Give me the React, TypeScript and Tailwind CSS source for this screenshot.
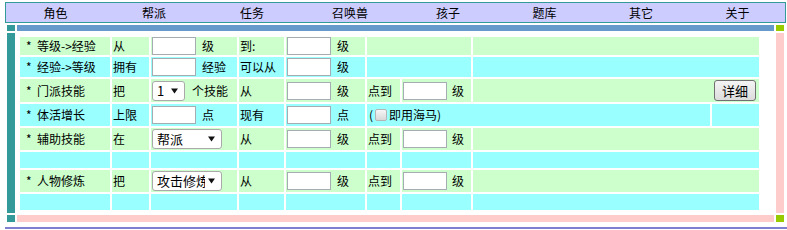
import React from 'react';

const G = 'bg-[#ccffcc]';
const C = 'bg-[#99ffff]';
const cellBase = 'flex items-center overflow-hidden whitespace-nowrap pl-[1px]';

const navItems = ['角色', '帮派', '任务', '召唤兽', '孩子', '题库', '其它', '关于'];

function TextBox() {
    return <input type="text" className="w-[44px] h-[18px] border border-[#a5acb2] bg-white shrink-0 outline-none" />;
}

function Arrow() {
    return (
        <svg width="7" height="6" viewBox="0 0 7 6" className="shrink-0">
            <path d="M0 0.5 H7 L3.5 5.5 Z" fill="#111" />
        </svg>
    );
}

function FakeSelect({ label, width, labelWidth }: { label: string; width: string; labelWidth: string }) {
    return (
        <div className={`${width} h-[20px] border border-[#a9a9a9] rounded-[3px] bg-white flex items-center justify-between pl-[4px] pr-[6px] shrink-0`}>
            <span className={`${labelWidth} overflow-hidden whitespace-nowrap text-[13px] leading-[18px]`}>{label}</span>
            <Arrow />
        </div>
    );
}

function Cell({ bg, span = '', children, className = '' }: { bg: string; span?: string; children?: React.ReactNode; className?: string }) {
    return <div className={`${cellBase} ${bg} ${span} ${className}`}>{children}</div>;
}

function Label({ text }: { text: string }) {
    return <span className="leading-[16px]">{'*\u00a0\u00a0' + text}</span>;
}

export default function App() {
    return (
        <div className="w-[787px] h-[230px] bg-white text-black text-[12px] leading-none overflow-hidden" style={{ fontFamily: '"Noto Sans CJK SC", "Liberation Sans", sans-serif' }}>
            {/* top menu */}
            <nav className="ml-[5px] mt-[2px] w-[781px] h-[21px] border border-[#339999] bg-[#ccccff] grid grid-cols-[99px_98px_98px_98px_98px_95px_98px_95px] items-center text-[12px]">
                {navItems.map((item) => (
                    <div key={item} className="text-center leading-[16px]">{item}</div>
                ))}
            </nav>

            {/* frame */}
            <div className="ml-[7px] mt-[2px] grid grid-cols-[8px_757px_8px] grid-rows-[6px_180px_7px] gap-x-[2px] gap-y-[2px]">
                <div className="bg-[#339999]" />
                <div className="bg-[#6699cc]" />
                <div className="bg-[#99cc00]" />

                <div className="bg-[#339999]" />
                <div className="bg-white pl-[3px] pt-[4px]">
                    <div className="grid grid-cols-[90px_37px_86px_45px_79px_33px_69px_237px_47px] grid-rows-[18px_20px_23px_22px_22px_16px_22px_16px] gap-[2px]">
                        {/* row 1 */}
                        <Cell bg={G} className="pl-[6px]"><Label text="等级->经验" /></Cell>
                        <Cell bg={G}>从</Cell>
                        <Cell bg={G}><TextBox /><span className="ml-[6px]">级</span></Cell>
                        <Cell bg={G}>到:</Cell>
                        <Cell bg={G}><TextBox /><span className="ml-[6px]">级</span></Cell>
                        <Cell bg={G} span="col-span-2" />
                        <Cell bg={G} span="col-span-2" />

                        {/* row 2 */}
                        <Cell bg={C} className="pl-[6px]"><Label text="经验->等级" /></Cell>
                        <Cell bg={C}>拥有</Cell>
                        <Cell bg={C}><TextBox /><span className="ml-[6px]">经验</span></Cell>
                        <Cell bg={C}>可以从</Cell>
                        <Cell bg={C}><TextBox /><span className="ml-[6px]">级</span></Cell>
                        <Cell bg={C} span="col-span-2" />
                        <Cell bg={C} span="col-span-2" />

                        {/* row 3 */}
                        <Cell bg={G} className="pl-[6px]"><Label text="门派技能" /></Cell>
                        <Cell bg={G}>把</Cell>
                        <Cell bg={G}><FakeSelect label="1" width="w-[33px]" labelWidth="w-[10px]" /><span className="ml-[7px]">个技能</span></Cell>
                        <Cell bg={G}>从</Cell>
                        <Cell bg={G}><TextBox /><span className="ml-[6px]">级</span></Cell>
                        <Cell bg={G}>点到</Cell>
                        <Cell bg={G}><TextBox /><span className="ml-[5px]">级</span></Cell>
                        <Cell bg={G} span="col-span-2" className="justify-end pr-[3px]">
                            <button className="w-[42px] h-[21px] border border-[#707070] rounded-[3px] bg-linear-to-b from-[#f4f4f4] to-[#dcdcdc] text-[13px] leading-none">详细</button>
                        </Cell>

                        {/* row 4 */}
                        <Cell bg={C} className="pl-[6px]"><Label text="体活增长" /></Cell>
                        <Cell bg={C}>上限</Cell>
                        <Cell bg={C}><TextBox /><span className="ml-[6px]">点</span></Cell>
                        <Cell bg={C}>现有</Cell>
                        <Cell bg={C}><TextBox /><span className="ml-[6px]">点</span></Cell>
                        <Cell bg={C} span="col-span-3" className="pl-[2px]">
                            <span>(</span>
                            <span className="w-[12px] h-[12px] ml-[2px] mr-[2px] border border-[#b5b5b5] rounded-[2px] bg-linear-to-b from-[#f6f6f6] to-[#d8d8d8] inline-block" />
                            <span>即用海马)</span>
                        </Cell>
                        <Cell bg={C} />

                        {/* row 5 */}
                        <Cell bg={G} className="pl-[6px]"><Label text="辅助技能" /></Cell>
                        <Cell bg={G}>在</Cell>
                        <Cell bg={G}><FakeSelect label="帮派" width="w-[70px]" labelWidth="w-[44px]" /></Cell>
                        <Cell bg={G}>从</Cell>
                        <Cell bg={G}><TextBox /><span className="ml-[6px]">级</span></Cell>
                        <Cell bg={G}>点到</Cell>
                        <Cell bg={G}><TextBox /><span className="ml-[5px]">级</span></Cell>
                        <Cell bg={G} span="col-span-2" />

                        {/* row 6 */}
                        <Cell bg={C} />
                        <Cell bg={C} />
                        <Cell bg={C} />
                        <Cell bg={C} />
                        <Cell bg={C} />
                        <Cell bg={C} />
                        <Cell bg={C} />
                        <Cell bg={C} span="col-span-2" />

                        {/* row 7 */}
                        <Cell bg={G} className="pl-[6px]"><Label text="人物修炼" /></Cell>
                        <Cell bg={G}>把</Cell>
                        <Cell bg={G}><FakeSelect label="攻击修炼" width="w-[70px]" labelWidth="w-[48px]" /></Cell>
                        <Cell bg={G}>从</Cell>
                        <Cell bg={G}><TextBox /><span className="ml-[6px]">级</span></Cell>
                        <Cell bg={G}>点到</Cell>
                        <Cell bg={G}><TextBox /><span className="ml-[5px]">级</span></Cell>
                        <Cell bg={G} span="col-span-2" />

                        {/* row 8 */}
                        <Cell bg={C} />
                        <Cell bg={C} />
                        <Cell bg={C} />
                        <Cell bg={C} />
                        <Cell bg={C} />
                        <Cell bg={C} />
                        <Cell bg={C} />
                        <Cell bg={C} span="col-span-2" />
                    </div>
                </div>
                <div className="bg-[#ffcccc]" />

                <div className="bg-[#339999]" />
                <div className="bg-[#ffcccc]" />
                <div className="bg-[#99cc00]" />
            </div>

            {/* bottom rule */}
            <div className="ml-[5px] mt-[5px] h-[2px] bg-[#7f7fcf]" />
        </div>
    );
}
